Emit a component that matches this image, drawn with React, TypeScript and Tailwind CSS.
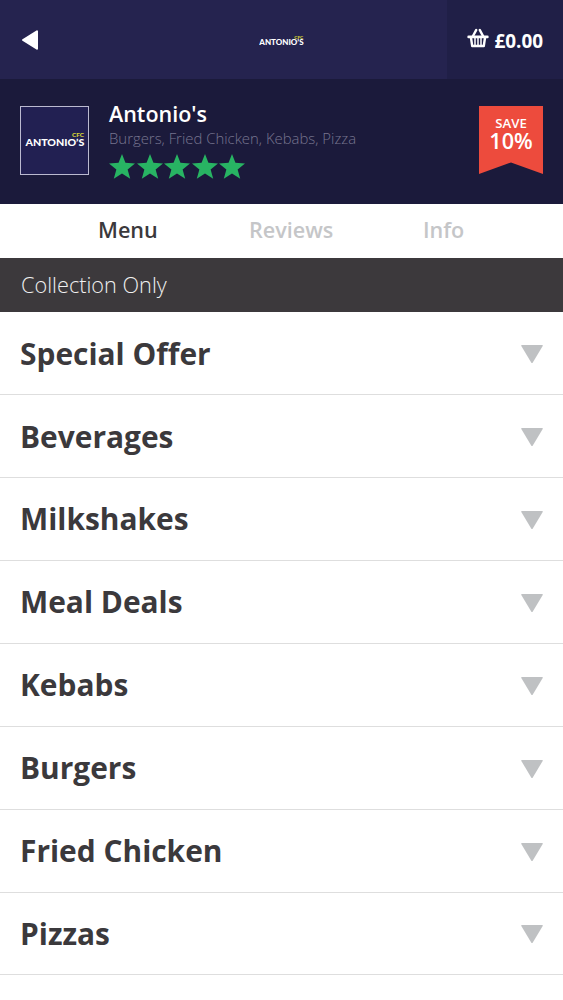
import { useState } from "react";

const categories = [
  "Special Offer",
  "Beverages",
  "Milkshakes",
  "Meal Deals",
  "Kebabs",
  "Burgers",
  "Fried Chicken",
  "Pizzas",
];

function Logo({ className }: { className: string }) {
  return (
    <svg viewBox="0 0 60 16" className={className} fontFamily="Lato, sans-serif">
      <text x="47" y="5.2" fontSize="6" fontWeight="900" fill="#d8d534" textLength="12" lengthAdjust="spacingAndGlyphs">
        CFC
      </text>
      <text x="0.4" y="13.6" fontSize="10.2" fontWeight="900" fill="#fff" textLength="59" lengthAdjust="spacingAndGlyphs">
        ANTONIO’S
      </text>
    </svg>
  );
}

function BasketIcon() {
  return (
    <svg viewBox="0 0 22 20" className="-mt-1 h-5 w-[22px]" fill="none" stroke="#fff">
      <path d="M6 8 9.2 2M16 8 12.8 2" strokeWidth="2.5" strokeLinecap="round" />
      <path d="M1.6 8.9h18.8" strokeWidth="2.6" strokeLinecap="round" />
      <path d="M3.9 9 5.2 18h11.6L18.1 9" strokeWidth="2.4" strokeLinejoin="round" />
      <path d="M8 9.5v8M11 9.5v8M14 9.5v8" strokeWidth="1.5" />
    </svg>
  );
}

function Star() {
  return (
    <svg viewBox="0 0 25 24" className="h-[25px] w-[26px]" fill="#28b463">
      <path d="M12.5 0l3.3 8.5 9.2.5-7.1 5.8 2.5 9-7.9-5-7.9 5 2.5-9L0 9l9.2-.5z" />
    </svg>
  );
}

export default function App() {
  const [tab, setTab] = useState("Menu");

  const tabClass = (name: string) => (tab === name ? "text-[#3b393c]" : "text-[#c5c6c8]");

  return (
    <div className="h-[1000px] w-[563px] overflow-hidden bg-white font-['Open_Sans',sans-serif] text-[#3b393c]">
      {/* Top bar */}
      <header className="grid h-[79px] grid-cols-[116px_1fr_116px] bg-[#25234f] text-white">
        <button className="flex items-center pl-[22px]" aria-label="Back">
          <svg viewBox="0 0 16 20" className="h-5 w-4" fill="#fff" stroke="#fff" strokeWidth="2" strokeLinejoin="round">
            <path d="M15 1.3v17.4L1 10z" />
          </svg>
        </button>
        <div className="flex items-center justify-center">
          <Logo className="mt-0.5 h-3 w-[45px]" />
        </div>
        <button className="flex items-center justify-end gap-[5px] bg-[#201f47] pr-5">
          <BasketIcon />
          <span className="mt-1 text-[18.9px] font-bold">£0.00</span>
        </button>
      </header>

      {/* Restaurant details */}
      <section className="flex h-[125px] items-start bg-[#1b1a3b] pr-5 pl-5">
        <div className="mt-[27px] flex h-[69px] w-[69px] shrink-0 items-center justify-center border border-[#bbbad0] bg-[#222052]">
          <Logo className="-mt-px h-4 w-[60px]" />
        </div>
        <div className="mt-[21px] ml-5 flex-1">
          <h1 className="text-[21.5px] leading-7 font-semibold text-white">Antonio's</h1>
          <p className="text-[14.9px] leading-5 font-light whitespace-nowrap text-[#77758f]">
            Burgers, Fried Chicken, Kebabs, Pizza
          </p>
          <div className="mt-[6px] flex gap-[1.5px]">
            {[1, 2, 3, 4, 5].map((n) => (
              <Star key={n} />
            ))}
          </div>
        </div>
        <div className="mt-[27px] flex h-[68px] w-16 flex-col items-center bg-[#ed4b3d] pt-[9px] text-white [clip-path:polygon(0_0,100%_0,100%_100%,50%_83%,0_100%)]">
          <span className="text-[13.2px] leading-[17px] font-semibold">SAVE</span>
          <span className="text-[21.6px] leading-[17px] font-semibold">10%</span>
        </div>
      </section>

      <nav className="flex h-[54px] items-center pb-0.5 pl-[98px] text-[21.6px] font-semibold">
        <button className={`w-[151px] text-left ${tabClass("Menu")}`} onClick={() => setTab("Menu")}>
          Menu
        </button>
        <button className={`w-[174px] text-left ${tabClass("Reviews")}`} onClick={() => setTab("Reviews")}>
          Reviews
        </button>
        <button className={tabClass("Info")} onClick={() => setTab("Info")}>
          Info
        </button>
      </nav>

      <div className="flex h-[54.4px] items-center bg-[#3c393c] pt-px pl-[21px] text-[21.7px] font-light text-[#f0f0f0]">
        Collection Only
      </div>

      {/* Menu categories */}
      <ul>
        {categories.map((name) => (
          <li key={name} className="flex h-[82.88px] items-center justify-between border-b border-[#dedede] pr-5 pl-5">
            <span className="mt-[1.5px] text-[29.9px] font-bold">{name}</span>
            <svg viewBox="0 0 22 18" className="mt-0.5 h-[18px] w-[22px]" fill="#bfc1c3">
              <path d="M.8 0h20.4q1 0 .5.9L11.8 17.4q-.8 1-1.6 0L.3.9Q-.2 0 .8 0z" />
            </svg>
          </li>
        ))}
      </ul>
    </div>
  );
}
